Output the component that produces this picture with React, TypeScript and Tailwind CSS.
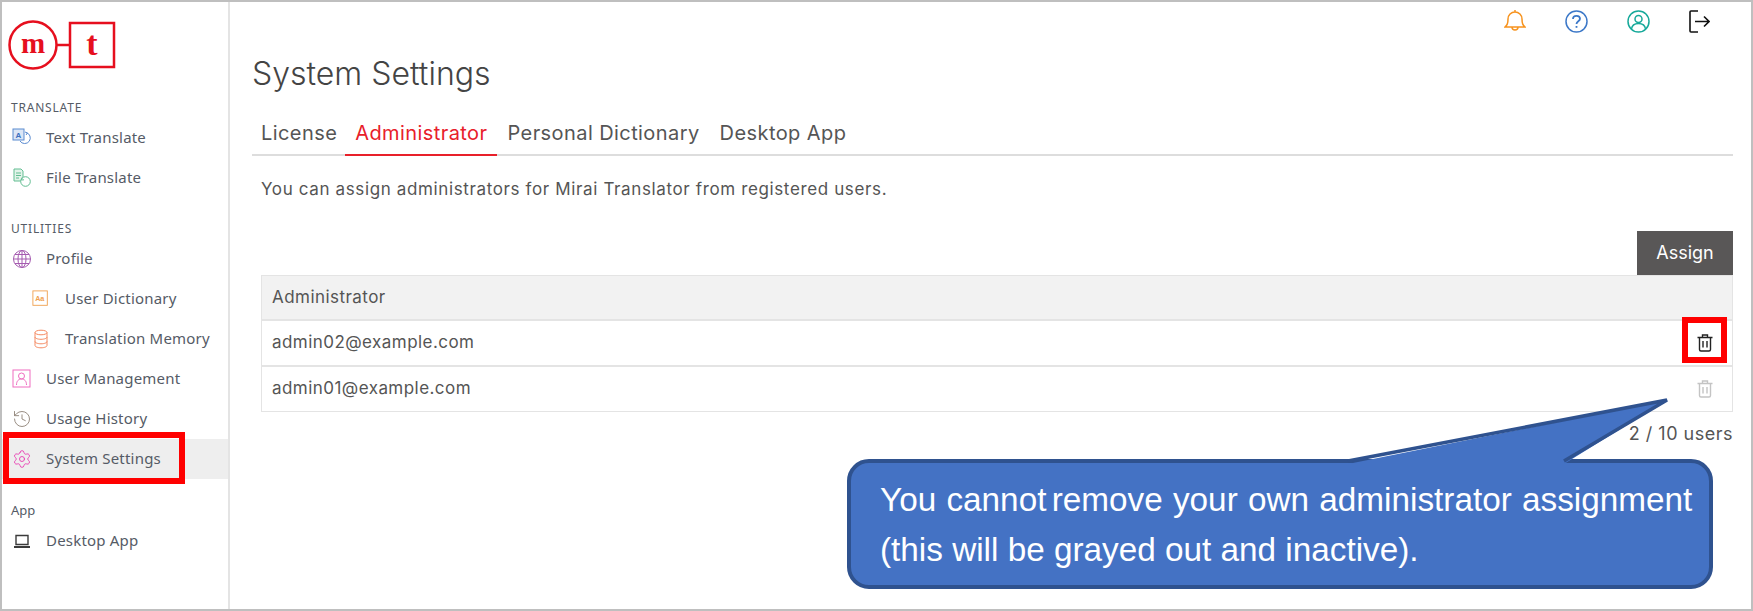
import React from "react";
import { History, Settings } from "lucide-react";

const Svg = ({ children, size = 20, className = "" }: { children: React.ReactNode; size?: number; className?: string }) => (
  <svg width={size} height={size} viewBox="0 0 20 20" fill="none" stroke="currentColor" strokeWidth={1} className={className}>
    {children}
  </svg>
);

const TextIcon = () => (
  <Svg className="text-[#5b8bd0]">
    <rect x="1" y="1" width="11" height="11" fill="#dbe6f6" />
    <text x="3.6" y="9.5" fontSize="8" fontWeight="700" fill="#3a6fc0" stroke="none" fontFamily="Liberation Sans">A</text>
    <path d="M14 4.5a5.6 5.6 0 1 1-6 8.5M13 4l2.5 1-1.5 2" />
  </Svg>
);
const FileIcon = () => (
  <Svg className="text-[#62bd92]">
    <path d="M2 1h7l2 2v10H2z" fill="#e3f4ea" />
    <path d="M4 5h5M4 7.5h5M4 10h3" />
    <circle cx="13.5" cy="13.5" r="4.8" fill="#fff" />
    <path d="M10 9.5l-.5 2.5 2.5-.2" />
  </Svg>
);
const GlobeIcon = () => (
  <Svg className="text-[#a55bb0]">
    <circle cx="10" cy="10" r="8.5" />
    <ellipse cx="10" cy="10" rx="4" ry="8.5" />
    <path d="M10 1.5v17M1.5 10h17M2.8 5.5h14.4M2.8 14.5h14.4" />
  </Svg>
);
const DictIcon = () => (
  <Svg size={18} className="text-[#f0a04e]">
    <rect x="1" y="1" width="16" height="16" />
    <text x="3.5" y="12.5" fontSize="8" fontWeight="700" fill="#f0a04e" stroke="none" fontFamily="Liberation Sans">Aa</text>
  </Svg>
);
const DbIcon = () => (
  <Svg className="text-[#f58a62]">
    <ellipse cx="10" cy="3.5" rx="6" ry="2.3" />
    <path d="M4 3.5v13c0 1.3 2.7 2.3 6 2.3s6-1 6-2.3v-13M4 8c0 1.3 2.7 2.3 6 2.3S16 9.300 16 8M4 12.500c0 1.300 2.700 2.300 6 2.300s6-1 6-2.300" />
  </Svg>
);
const UserBoxIcon = () => (
  <Svg className="text-[#ef6dc0]">
    <rect x="1" y="1" width="17" height="17" />
    <circle cx="9.500" cy="7" r="3" />
    <path d="M4.500 16c0-4 2-6 5-6s5 2 5 6" />
  </Svg>
);
const LaptopIcon = () => (
  <Svg className="text-[#3b3b3b]">
    <path d="M4 4.500h12v9H4z" strokeWidth={1.400} />
    <path d="M2 16h16" strokeWidth={2} />
  </Svg>
);

const Trash = ({ className }: { className: string }) => (
  <svg width="16" height="18" viewBox="0 0 16 18" fill="none" stroke="currentColor" strokeWidth={1.400} className={className}>
    <path d="M.500 3.500h15M5.500 3.500V1h5v2.500M2.500 3.500V15.500a1.500 1.500 0 0 0 1.500 1.500h8a1.500 1.500 0 0 0 1.500-1.500V3.500M6 7v6.500M10 7v6.500" />
  </svg>
);

const Item = ({ icon, label, sub, active }: { icon: React.ReactNode; label: string; sub?: boolean; active?: boolean }) => (
  <div className={`flex h-10 items-center ${active ? "bg-[#eeeeee]" : ""} ${sub ? "pl-[29px]" : "pl-[10px]"}`}>
    <span className="mr-[14px] flex w-5 justify-center">{icon}</span>
    <span className="pb-[2px] text-[15px] tracking-[0.2px] text-[#555b66]">{label}</span>
  </div>
);

const Label = ({ children, className = "" }: { children: React.ReactNode; className?: string }) => (
  <div className={`flex h-5 items-center pl-[9px] text-[12px] text-[#555b66] ${className}`}>{children}</div>
);

export default function App() {
  return (
    <div className="relative flex h-[611px] w-[1753px] overflow-hidden border-2 border-[#bfbfbf] bg-white font-['Noto_Sans',sans-serif]">
      <aside className="w-[228px] shrink-0 border-r-2 border-[#e4e4e4]">
        <div className="h-[96px] pl-[6px] pt-[17px]">
          <svg width="112" height="54" viewBox="0 0 112 54" fill="none" stroke="#e60f1e" strokeWidth={2.500}>
            <circle cx="25" cy="26" r="23.500" />
            <rect x="62" y="4" width="44" height="44" />
            <path d="M49 26h13" />
            <text x="25" y="34" textAnchor="middle" fontSize="29" fontWeight="700" fill="#e60f1e" stroke="none" fontFamily="Liberation Serif">m</text>
            <text x="84" y="36" textAnchor="middle" fontSize="34" fontWeight="700" fill="#e60f1e" stroke="none" fontFamily="Liberation Serif">t</text>
          </svg>
        </div>
        <Label className="tracking-[0.8px]">TRANSLATE</Label>
        <Item icon={<TextIcon />} label="Text Translate" />
        <Item icon={<FileIcon />} label="File Translate" />
        <Label className="mt-[21px] tracking-[0.8px]">UTILITIES</Label>
        <Item icon={<GlobeIcon />} label="Profile" />
        <Item icon={<DictIcon />} label="User Dictionary" sub />
        <Item icon={<DbIcon />} label="Translation Memory" sub />
        <Item icon={<UserBoxIcon />} label="User Management" />
        <Item icon={<History size={20} strokeWidth={1.100} className="text-[#8f8378]" />} label="Usage History" />
        <Item icon={<Settings size={20} strokeWidth={1.100} className="text-[#e83fb2]" />} label="System Settings" active />
        <Label className="mt-[22px] text-[13px]">App</Label>
        <Item icon={<LaptopIcon />} label="Desktop App" />
      </aside>

      <main className="min-w-0 flex-1 pl-[22px] pr-[18px] font-['Inter',sans-serif]">
        <div className="flex h-[38px] items-center justify-end gap-[39px] pr-[23px]">
          <svg width="22" height="24" viewBox="0 0 22 24" fill="none" stroke="#f7931e" strokeWidth={1.500}>
            <path d="M1 18c2-2 3-3 3-8a7 7 0 0 1 14 0c0 5 1 6 3 8zM11 1v2M8 18a3 3 0 0 0 6 0" />
          </svg>
          <svg width="23" height="23" viewBox="0 0 23 23" fill="none" stroke="#3c78c8" strokeWidth={1.500}>
            <circle cx="11.500" cy="11.500" r="10.500" />
            <path d="M8 9c0-2 1.500-3.200 3.500-3.200S15 7 15 8.800c0 2.500-3.500 2.500-3.500 5.200" strokeWidth={1.800} />
            <path d="M11.500 16v1.800" strokeWidth={1.800} />
          </svg>
          <svg width="23" height="23" viewBox="0 0 23 23" fill="none" stroke="#17a99a" strokeWidth={1.500}>
            <circle cx="11.500" cy="11.500" r="10.500" />
            <circle cx="11.500" cy="9" r="3.500" />
            <path d="M4.500 19c.5-4 3-5.500 7-5.500s6.500 1.500 7 5.500" />
          </svg>
          <svg width="21" height="23" viewBox="0 0 21 23" fill="none" stroke="#111" strokeWidth={1.600}>
            <path d="M9 1H2a1 1 0 0 0-1 1v19a1 1 0 0 0 1 1h7M6 11.500h14M15 6.500l5 5-5 5" />
          </svg>
        </div>
        <h1 className="mt-[14px] h-10 text-[32px] leading-10 font-light text-[#444444]">System Settings</h1>
        <nav className="mt-[17px] flex h-[45px] border-b-2 border-[#dddddd] pl-[9px] text-[20px] tracking-[0.42px] text-[#555555]">
          <span className="flex h-[45px] items-center pb-[2px] pr-[8px]">License</span>
          <span className="flex h-[45px] items-center border-b-2 border-[#e8202a] px-[10px] text-[#e8202a]">Administrator</span>
          <span className="flex h-[45px] items-center px-[10px] pb-[2px]">Personal Dictionary</span>
          <span className="flex h-[45px] items-center px-[10px] pb-[2px]">Desktop App</span>
        </nav>
        <div className="ml-[9px]">
          <p className="mt-[21px] h-6 text-[17px] leading-6 tracking-[0.63px] text-[#555555]">You can assign administrators for Mirai Translator from registered users.</p>
          <div className="mt-[30px] flex justify-end">
            <button className="h-[44px] w-[96px] bg-[#595757] pb-[1px] text-[18px] text-white">Assign</button>
          </div>
          <div className="border border-[#e4e4e4] text-[17px] tracking-[0.45px] text-[#555555]">
            <div className="flex h-[45px] items-center border-b-2 border-[#e4e4e4] bg-[#f2f2f2] pl-[10px]">Administrator</div>
            <div className="flex h-[46px] items-center justify-between border-b-2 border-[#e4e4e4] pl-[10px] pr-[19px]">
              admin02@example.com
              <Trash className="text-[#222222]" />
            </div>
            <div className="flex h-[44px] items-center justify-between pl-[10px] pr-[19px]">
              admin01@example.com
              <Trash className="text-[#c4c4c4]" />
            </div>
          </div>
          <p className="mt-[8px] text-right text-[18px] tracking-[0.5px] text-[#555555]">2 / 10 users</p>
        </div>
      </main>

      <div className="absolute left-[1px] top-[430px] h-[52px] w-[182px] border-[6px] border-[#ff0000]" />
      <div className="absolute left-[1680px] top-[315px] h-[46px] w-[45px] border-[6px] border-[#ff0000]" />

      <div className="absolute left-[845px] top-[457px] flex h-[130px] w-[866px] flex-col justify-center rounded-[22px] border-[4px] border-[#2f528f] bg-[#4472c4] pl-[29px] pt-[2px] font-['Liberation_Sans',sans-serif] text-[33.3px] leading-[50px] whitespace-nowrap text-white">
        <div className="[word-spacing:1px]">You cannot<span className="ml-[-5px]"> remove</span> your own administrator assignment</div>
        <div>(this will be grayed out and inactive).</div>
      </div>
      <svg className="absolute left-[1340px] top-[390px]" width="340" height="80" viewBox="0 0 340 80" fill="none">
        <path d="M6 72L325 8 222 72z" fill="#4472c4" />
        <path d="M6 69L325 8 222 69" stroke="#2f528f" strokeWidth={3.500} />
      </svg>
    </div>
  );
}
